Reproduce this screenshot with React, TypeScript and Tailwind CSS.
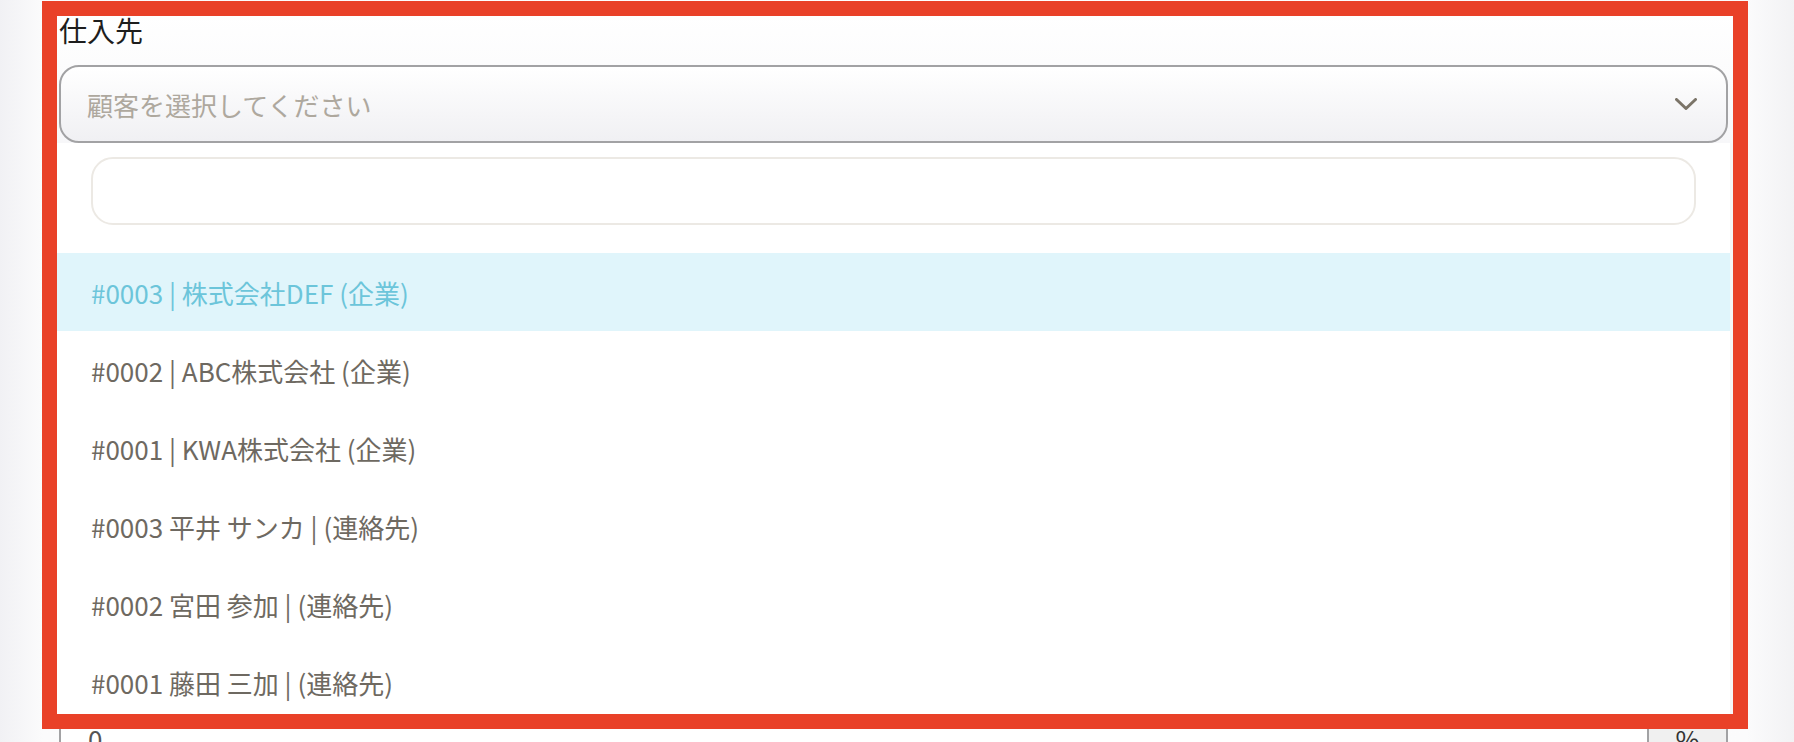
const customers = [
  "#0003 | 株式会社DEF (企業)",
  "#0002 | ABC株式会社 (企業)",
  "#0001 | KWA株式会社 (企業)",
  "#0003 平井 サンカ | (連絡先)",
  "#0002 宮田 参加 | (連絡先)",
  "#0001 藤田 三加 | (連絡先)",
];

const font = "font-['Noto_Sans_CJK_JP','Noto_Sans',sans-serif]";

function Chevron() {
  return (
    <svg width="22" height="12" viewBox="0 0 22 12" fill="none" aria-hidden="true">
      <polyline
        points="1.5,1.5 11,10.5 20.5,1.5"
        stroke="#7b7468"
        strokeWidth="3"
        strokeLinecap="round"
        strokeLinejoin="round"
      />
    </svg>
  );
}

export default function App() {
  return (
    <div
      className={`flex h-[742px] w-[1794px] flex-col overflow-hidden bg-[linear-gradient(90deg,#f1f1f4_0%,#fbfbfc_2.4%,#ffffff_50%,#fbfbfc_97.4%,#f2f2f4_100%)] ${font}`}
    >
      <div className="ml-[42px] mt-[1px] h-[728px] w-[1706px] shrink-0 border-[15px] border-[#e94128]">
        <div className="flex h-full flex-col bg-white">
          <div className="bg-gradient-to-b from-white to-[#f7f7f9]">
            <p className="h-[32px] pl-[2px] text-[28px] leading-[28px] text-[#1d1d1d]">仕入先</p>
            <div className="ml-[2px] mr-[5px] mt-[17px] flex h-[78px] items-center justify-between rounded-[20px] border-2 border-[#a2a2a4] bg-gradient-to-b from-white to-[#f0f0f3] pl-[26px] pr-[29px]">
              <span className="text-[26px] text-[#aea89e]">顧客を選択してください</span>
              <Chevron />
            </div>
          </div>

          <div className="flex min-h-0 flex-1 bg-[#f6f6f8]">
            <div className="mr-[3px] flex min-h-0 flex-1 flex-col overflow-hidden bg-white">
              <div className="mx-[34px] mt-[14px] h-[68px] shrink-0 rounded-[22px] border-2 border-[#ece9e4] bg-white" />
              <ul className="mt-[28px]">
                {customers.map((c, i) => (
                  <li
                    key={c}
                    className={`flex h-[78px] items-center pl-[34px] text-[26px] ${
                      i === 0 ? "bg-[#e0f5fb] text-[#6cc5da]" : "text-[#6e6961]"
                    }`}
                  >
                    {c}
                  </li>
                ))}
              </ul>
            </div>
          </div>
        </div>
      </div>

      <div className="h-[13px] overflow-hidden">
        <div className="-mt-[24px] ml-[59px] flex h-[80px] w-[1669px] rounded-[18px] border-2 border-[#a2a2a4] bg-white">
          <span className="flex-1 pl-[27px] pt-[16px] text-[26px] leading-[32px] text-[#555]">0</span>
          <span className="w-[79px] border-l-2 border-[#a2a2a4] bg-[#f0f0f0] pt-[16px] text-center text-[26px] leading-[32px] text-[#333]">
            %
          </span>
        </div>
      </div>
    </div>
  );
}
